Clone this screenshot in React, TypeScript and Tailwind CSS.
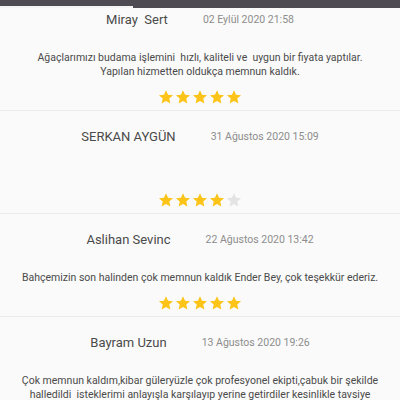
const reviews = [
  {
    name: "Miray  Sert",
    date: "02 Eylül 2020 21:58",
    text: "Ağaçlarımızı budama işlemini  hızlı, kaliteli ve  uygun bir fiyata yaptılar.\nYapılan hizmetten oldukça memnun kaldık.",
    rating: 5,
  },
  { name: "SERKAN AYGÜN", date: "31 Ağustos 2020 15:09", text: "", rating: 4 },
  {
    name: "Aslihan Sevinc",
    date: "22 Ağustos 2020 13:42",
    text: "Bahçemizin son halinden çok memnun kaldık Ender Bey, çok teşekkür ederiz.",
    rating: 5,
  },
  {
    name: "Bayram Uzun",
    date: "13 Ağustos 2020 19:26",
    text: "Çok memnun kaldım,kibar güleryüzle çok profesyonel ekipti,çabuk bir şekilde halledildi  isteklerimi anlayışla karşılayıp yerine getirdiler kesinlikle tavsiye ediyorum.",
    rating: 5,
  },
];

function Star({ filled }: { filled: boolean }) {
  return (
    <svg viewBox="0 0 24 24" className="h-[16px] w-[16px]">
      <path
        d="M12 1.8l3.05 6.9 7.5.72-5.66 5 1.66 7.36L12 17.9l-6.55 3.88 1.66-7.36-5.66-5 7.5-.72z"
        fill={filled ? "#fcc419" : "#e3e3e3"}
      />
    </svg>
  );
}

export default function App() {
  return (
    <div className="h-[400px] w-[400px] overflow-hidden bg-[#fafafa] font-['Roboto','Liberation_Sans',sans-serif]">
      <div className="flex h-[8px] items-end bg-[#4e4b53]">
        <div className="h-[2px] w-[133px] bg-[#f4f4f4]" />
      </div>
      {reviews.map((r, i) => (
        <div
          key={r.name}
          className={`flex flex-col items-center border-b border-[#ebebeb] pb-[5px] ${i === 0 ? "pt-[2px]" : "pt-[16px]"}`}
        >
          <div className="flex h-[20px] items-center justify-center gap-[35px]">
            <span className="whitespace-pre text-[13px] text-[#4a4a4a]">{r.name}</span>
            <span className="text-[10.5px] text-[#8d8d8d]">{r.date}</span>
          </div>
          <p className="mt-[21px] min-h-[14px] whitespace-pre-wrap px-[14px] text-center text-[10.5px] leading-[14px] text-[#4a4a4a]">
            {r.text}
          </p>
          <div className="mt-[10px] flex gap-[1px]">
            {[0, 1, 2, 3, 4].map((s) => (
              <Star key={s} filled={s < r.rating} />
            ))}
          </div>
        </div>
      ))}
    </div>
  );
}
